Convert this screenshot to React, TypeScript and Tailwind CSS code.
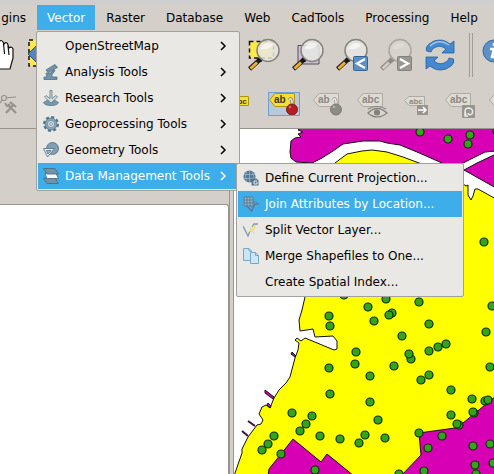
import React, { ReactNode } from 'react';

const topMenus = ['Raster', 'Database', 'Web', 'CadTools', 'Processing', 'Help'];

function Magnifier({ muted = false }: { muted?: boolean }) {
  return (
    <g>
      <path d="M1.500 30 L12 20.500" stroke={muted ? '#8d8a85' : '#222'} strokeWidth="4.500" />
      <path d="M2.500 29.500 L9 23.500" stroke={muted ? '#cfccc5' : '#f4b02c'} strokeWidth="2.800" />
      <circle cx="12" cy="20.500" r="2.500" fill={muted ? '#8d8a85' : '#161616'} />
      <circle cx="20" cy="11.500" r="11" fill={muted ? '#d6d3cc' : '#e6e6e4'} fillOpacity="0.85" stroke={muted ? '#a9a69f' : '#85857d'} strokeWidth="1.500" />
      <path d="M12.500 10a8 8 0 0 1 13-4q-4 5-13 4" fill="#fff" fillOpacity={muted ? 0.2 : 0.6} />
    </g>
  );
}

function Toolbar1Icon({ kind }: { kind: string }) {
  return (
    <svg className="size-8 overflow-visible" viewBox="0 0 32 32" aria-hidden="true">
      {kind === 'hand' && (
        <g fill="#fff" stroke="#111" strokeWidth="1.200">
          <path d="M10 30L3 18q0-3 3-3l5 5V6q2-3 4 0V3q2-3 4 0l1 2q3-3 4 1l1 3q3-2 4 1v9l-3 11z" />
          <path d="M15 5v10M19.500 4l1 11M24 7l1 9" fill="none" />
        </g>
      )}
      {kind === 'pan' && (
        <>
          <path d="M1 1H27V27H1Z" fill="#ffe94a" stroke="#111" strokeWidth="1.500" strokeDasharray="4 3" />
          <path d="M0 15l9-9v18z" fill="#5b83b9" stroke="#31537e" />
        </>
      )}
      {kind === 'selection' && (
        <>
          <path d="M1.500 2.500H25.500V19H1.500Z" fill="#ffe94a" stroke="#111" strokeWidth="1.500" strokeDasharray="4 3" />
          <Magnifier />
        </>
      )}
      {kind === 'layer' && (
        <>
          <path d="M6 6.500H27V25H6Z" fill="#cdbfd2" stroke="#5d4a60" />
          <Magnifier />
        </>
      )}
      {(kind === 'last' || kind === 'next') && (
        <>
          <Magnifier muted={kind === 'next'} />
          <rect x="17.500" y="17.500" width="14" height="14" rx="1" fill={kind === 'last' ? '#5b8fc5' : '#9a9893'} stroke={kind === 'last' ? '#38648f' : '#85827d'} />
          <path d={kind === 'last' ? 'M29 20l-8 4.500 8 4.500' : 'M20 20l8 4.500-8 4.500'} fill="none" stroke="#fff" strokeWidth="2.200" />
        </>
      )}
      {kind === 'refresh' && (
        <g fill="#4588cf" stroke="#296098" strokeWidth="0.800">
          <path d="M2.500 12Q1 8 5 5L10 2Q19-1 26 5L30 2V14H18L22 10Q16 5 10 9Q8 10 7 13Z" />
          <path d="M29.500 20Q31 24 27 27L22 30Q13 33 6 27L2 30V18H14L10 22Q16 27 22 23Q24 22 25 19Z" />
          <path d="M6 7Q15-1 25 6" fill="none" stroke="#9fc6ee" strokeWidth="1.500" />
        </g>
      )}
      {kind === 'info' && (
        <>
          <circle cx="14" cy="12" r="11" fill="#5c91c7" stroke="#396b9e" />
          <g stroke="#fff" strokeWidth="2.500" fill="none">
            <path d="M10 10h4l-2 8h4" />
            <path d="M14 4v3" />
          </g>
        </>
      )}
    </svg>
  );
}

function LabelIcon({ kind }: { kind: string }) {
  const yellow = kind === 'pinned' || kind === 'labels';
  const small = kind === 'move' || kind === 'labels';
  const short = kind === 'pinned' || kind === 'unpin';
  return (
    <svg className="block h-6 w-8 overflow-visible" viewBox="0 0 32 24" aria-hidden="true">
      {kind === 'node' ? (
        <g fill="none" stroke="#96938d" strokeWidth="1.200">
          <path d="M7 12L12 6 24 5" />
          <circle cx="12" cy="6" r="2.500" fill="#d4d0c8" />
          <path d="M14 21L22 12M16 13l8 8" strokeWidth="2.200" />
          <path d="M18 10l6 5M13 11l2 3 3-2" strokeWidth="2" />
        </g>
      ) : (
        <>
          <path
            d={small ? 'M4.500 8.500L9 4.500H24.500V13.500H9Z' : 'M1.500 8L7 1.500H26.500V14.500H7Z'}
            fill={yellow ? '#f7df31' : '#dedbd4'}
            stroke={yellow ? '#af9214' : '#aeaba5'}
          />
          {kind !== 'tag' && (
            <text
              x={small ? 9 : 6}
              y={small ? 12 : 11}
              fontSize={small ? 8 : 10}
              fontWeight="bold"
              fontFamily="Liberation Sans, sans-serif"
              fill={yellow ? '#39391f' : '#8b8882'}
            >
              {short ? 'ab' : 'abc'}
            </text>
          )}
          {short && (
            <>
              <path d="M21 8q2-3 3 1v5" fill="none" stroke={yellow ? '#777' : '#96938d'} strokeWidth="3" />
              <path d="M21 8q2-3 3 1v5" fill="none" stroke="#eee" strokeWidth="1.500" />
              <circle cx="24" cy="17.500" r="5.500" fill={yellow ? '#b41f25' : '#8e8b85'} stroke={yellow ? '#80171b' : '#7d7a75'} />
              <circle cx="22" cy="15" r="1.300" fill="#fff" opacity="0.350" />
            </>
          )}
          {kind === 'show' && (
            <g fill="none" stroke="#85827c" strokeWidth="1.200">
              <path d="M12 21q9-9 19 0-10 8-19 0z" fill="#d9d6cf" />
              <path d="M12 17q9-5 18 0" />
              <circle cx="21" cy="20.500" r="2.500" fill="#85827c" />
            </g>
          )}
          {kind === 'move' && (
            <>
              <rect x="17" y="13" width="11" height="10" fill="#98958f" />
              <path d="M18 18h8M23 15l3 3-3 3" fill="none" stroke="#fff" strokeWidth="1.500" />
            </>
          )}
          {kind === 'rotate' && (
            <>
              <rect x="18" y="13" width="13" height="13" rx="1" fill="#98958f" />
              <path d="M22 23q-3-7 3-7 5 1 3 6-3 2-4-1m-3-1v4h3" fill="none" stroke="#eee" strokeWidth="1.500" />
            </>
          )}
        </>
      )}
    </svg>
  );
}

const icons: Record<string, ReactNode> = {
  analysis: (
    <g fill="#7094ac" stroke="#506f83" strokeWidth="0.800">
      <path d="M3 6L12 .5l2.500 3L5 8.500z" />
      <path d="M3 9h5l1-2 3-1q-1 3-3 4v3h5v2.500H1V13h3z" />
    </g>
  ),
  research: (
    <g fill="#7598ad" stroke="#58788b" strokeWidth="0.800">
      <path d="M.5 12.500L4 10.500h8l3.500 2q-1 3-7.500 3t-7.500-3z" />
      <path d="M7 .5h2v8l4-3 1.500 1.500L8 13 1.500 7 3 5.500l4 3z" fill="#d3dbdf" />
    </g>
  ),
  gear: (
    <g>
      <circle cx="8" cy="8" r="6.800" fill="none" stroke="#53758c" strokeWidth="2.400" strokeDasharray="3 2.340" />
      <circle cx="8" cy="8" r="6" fill="#86a4b8" stroke="#53758c" strokeWidth="0.800" />
      <circle cx="8" cy="8" r="3.500" fill="#dfe4e6" stroke="#6a8798" strokeWidth="0.800" />
      <circle cx="8" cy="8" r="1.500" fill="#e9e8e4" stroke="#6a8798" strokeWidth="0.800" />
    </g>
  ),
  geometry: (
    <g stroke="#587789" strokeWidth="0.900">
      <circle cx="9.500" cy="6.500" r="6" fill="#809fb5" />
      <path d="M.5 6.500h11L4.500 15z" fill="#ecece8" />
      <path d="M3.500 8.500h4.500L5 12z" fill="#a9bbc5" />
    </g>
  ),
  layers: (
    <g stroke="#4b6778" strokeWidth="0.800">
      <path d="M.5 10h11.500l3.500 5.500H4z" fill="#6f93a9" />
      <path d="M2 5.500h11l2.500 5H4z" fill="#f6f5f2" />
      <path d="M.5.5H12L15.500 6H4z" fill="#6f93a9" />
    </g>
  ),
  projection: (
    <g>
      <circle cx="6.500" cy="6.500" r="6" fill="#527895" />
      <path d="M1 4.500h11M1 8.500h11M6.500 1v11M3.500 2q-2 4 0 9M9.500 2q2 4 0 9" fill="none" stroke="#a5bccb" strokeWidth="0.700" />
      <path d="M8.500 8.500h5l2 2v5h-7z" fill="#58758b" />
      <path d="M14 11h-3v3h3v-2" fill="none" stroke="#eee" />
    </g>
  ),
  join: (
    <g fill="none" stroke="#587d97">
      <path d="M1 1h9v9H1zM1 4h9M4 1v9M7 1v9M1 7h9" fill="#98b4c6" />
      <path d="M4 10l4.500 5L12 8h4" strokeWidth="1.500" />
      <rect x="11" y="6" width="2" height="2" fill="#a8bac5" />
    </g>
  ),
  split: (
    <g fill="none">
      <path d="M0 4l5 10 2-5M9 5l2-3h4" stroke="#8699a5" strokeWidth="1.300" />
      <path d="M7 8l5-2M8 8l4 4M7 5l2 5M12 3l-2 6M6 10l7-6" stroke="#e9df7a" />
    </g>
  ),
  merge: (
    <g fill="#c9e6f8" stroke="#77a7c5">
      <path d="M.5.5H6L8.500 3v9.500h-8zM6 .5V3h2.500" />
      <path d="M7.500 4.500h5l3 3v8h-8zM12.500 4.500v3h3" />
    </g>
  ),
};

function MenuIcon({ name }: { name?: string }) {
  return (
    <span className="size-4 shrink-0">
      {name && <svg className="size-4" viewBox="0 0 16 16" aria-hidden="true">{icons[name]}</svg>}
    </span>
  );
}

function MenuRow({ label, icon, active = false, arrow = false }: { label: string; icon?: string; active?: boolean; arrow?: boolean }) {
  return (
    <button
      type="button"
      role="menuitem"
      aria-haspopup={arrow ? 'menu' : undefined}
      className={`flex h-[26px] w-full items-center gap-[6px] pr-2 pl-[5px] text-left whitespace-nowrap ${active ? 'bg-[#3daee9] text-white' : 'text-black'}`}
    >
      <MenuIcon name={icon} />
      <span className="flex-1">{label}</span>
      {arrow && (
        <svg className="size-3" viewBox="0 0 12 12" fill="none" stroke="currentColor" strokeWidth="1.500" aria-hidden="true">
          <path d="M3 2l4 4-4 4" />
        </svg>
      )}
    </button>
  );
}

const vectorItems = [
  { label: 'OpenStreetMap' },
  { label: 'Analysis Tools', icon: 'analysis' },
  { label: 'Research Tools', icon: 'research' },
  { label: 'Geoprocessing Tools', icon: 'gear' },
  { label: 'Geometry Tools', icon: 'geometry' },
];

const dataItems = [
  { label: 'Define Current Projection...', icon: 'projection' },
  { label: 'Join Attributes by Location...', icon: 'join', active: true },
  { label: 'Split Vector Layer...', icon: 'split' },
  { label: 'Merge Shapefiles to One...', icon: 'merge' },
  { label: 'Create Spatial Index...' },
];

const panel = 'absolute z-10 rounded-[2px] border border-[#a3a19c] bg-[#e9e8e4] p-px';

function VectorMenu() {
  return (
    <div role="menu" aria-label="Vector" className={`${panel} top-[26px] -left-px w-[204px]`}>
      {vectorItems.map((item) => (
        <MenuRow key={item.label} {...item} arrow />
      ))}
      <div className="relative">
        <MenuRow label="Data Management Tools" icon="layers" active arrow />
        <div role="menu" aria-label="Data Management Tools" className={`${panel} top-0 left-[198px] w-[228px]`}>
          {dataItems.map((item) => (
            <MenuRow key={item.label} {...item} />
          ))}
        </div>
      </div>
    </div>
  );
}

const points = [
  [420, 132], [448, 139], [470, 135], [468, 144], [497, 131], [484, 242], [344, 295], [386, 299], [419, 302],
  [368, 307], [392, 313], [389, 315], [329, 316], [330, 326], [374, 321], [429, 324], [402, 336], [492, 306],
  [486, 332], [446, 344], [438, 347], [429, 351], [356, 352], [355, 364], [411, 359], [409, 354], [394, 366],
  [329, 368], [370, 376], [429, 375], [421, 380], [490, 367], [451, 390], [330, 394], [370, 402], [378, 420],
  [292, 413], [312, 416], [306, 424], [300, 431], [320, 436], [340, 439], [359, 443], [365, 435], [385, 438],
  [274, 436], [268, 444], [262, 450], [281, 454], [315, 470], [472, 399], [485, 401], [488, 400], [451, 415],
  [474, 413], [473, 412], [459, 425], [457, 424], [419, 433], [442, 436], [428, 448], [473, 446], [490, 444],
  [475, 465], [493, 463], [424, 471], [399, 474], [476, 474],
];

function MapCanvas() {
  return (
    <svg className="block h-full min-h-[345px] w-full bg-white" viewBox="234 129 260 345" preserveAspectRatio="xMinYMin slice" role="img" aria-label="Map canvas">
      <g stroke="#111" strokeWidth="1">
        <path
          d="M302 127L298 130 303 132 298 134 301 137 295 138 291 141 290 152 291 158 296 162 312 163 322 158 333 151 343 144 363 141 380 141 387 143 400 145 417 152 442 163 452 168 463 163 475 157 485 152 496 151V127Z"
          fill="#d700b5"
        />
        <path
          d="M305 297L320 180 335 163 347 154 362 151 372 150 387 152 403 157 419 163 463 184 466 186 468 185 468 195 471 200 473 196 475 189 478 189 496 199V476H234L242 453 242 449 248 437 257 425 261 424 263 420 259 414 262 407 266 405 270 408 274 398 279 390 286 383 290 377 295 358 298 350 299 343 295 340 297 338 301 341 305 338 310 340 334 350 337 349 337 341 333 336 315 337 313 329 300 331 299 320 302 310Z"
          fill="#ff0"
        />
        <path d="M464 170L477 163 496 154V188Z" fill="#d700b5" />
        <path d="M268 476L269 469 293 439 321 462 327 454 354 476Z" fill="#d700b5" />
        <path d="M401 476L421 455 419 433 455 428 463 423 496 396V476Z" fill="#d700b5" />
        <path d="M265 390l9 7-1 2-8-6ZM292 352l4 4-1 1-4-3ZM268 403l3 3-1 2-3-3Z" fill="#d700b5" />
        <path d="M248 421l7 5M242 431l6 5" fill="none" stroke="#40103a" strokeWidth="2" />
      </g>
      <g fill="#33a51c" stroke="#102d08" strokeWidth="1.200">
        {points.map(([x, y]) => <circle key={`${x}-${y}`} cx={x} cy={y} r="4" />)}
      </g>
    </svg>
  );
}

const mainTools = ['hand', 'pan', 'layer', 'last', 'next', 'refresh', 'selection', 'layer', 'last', 'next', 'refresh'];
const labelTools = ['labels', 'pinned', 'unpin', 'show', 'move', 'rotate', 'tag'];

export default function App() {
  return (
    <div className="flex min-h-screen flex-col overflow-hidden bg-[#d4cfc8] font-['DejaVu_Sans',sans-serif] text-[12px] leading-4 text-black">
      <header className="border-t-[5px] border-[#cfcfcf]">
        <nav aria-label="Main menu" className="flex h-[25px] gap-px whitespace-nowrap">
          <button type="button" aria-label="Plugins" className="flex w-9 items-center justify-end pr-[10px]">gins</button>
          <div className="relative">
            <button type="button" aria-expanded="true" className="h-full bg-[#3daee9] px-[10px] text-white">Vector</button>
            <VectorMenu />
          </div>
          {topMenus.map((name) => <button type="button" key={name} className="px-[10px]">{name}</button>)}
        </nav>
        <div role="toolbar" aria-label="Navigation" className="-ml-[22px] flex h-[50px] items-center">
          {mainTools.map((kind, index) => (
            <button type="button" key={index} aria-label={kind} className="flex w-11 shrink-0 justify-center"><Toolbar1Icon kind={kind} /></button>
          ))}
          <span className="mx-[7px] h-11 w-1 shrink-0 border-x border-[#a19e98]" />
          <button type="button" aria-label="info" className="flex w-8 shrink-0 justify-center"><Toolbar1Icon kind="info" /></button>
        </div>
        <div role="toolbar" aria-label="Labels" className="-ml-[14px] flex h-12 items-center">
          <button type="button" aria-label="Node tool" className="flex w-11 shrink-0 justify-center"><LabelIcon kind="node" /></button>
          <span className="w-[188px] shrink-0" />
          {labelTools.map((kind) => (
            <button type="button" key={kind} aria-label={kind} className="flex w-11 shrink-0 justify-center">
              <span className={kind === 'pinned' ? 'bg-[#bac9da] outline-1 -outline-offset-1 outline-[#6e9fd5]' : ''}><LabelIcon kind={kind} /></span>
            </button>
          ))}
        </div>
      </header>
      <main className="flex flex-1 border-t border-[#98958f]">
        <aside className="flex w-[229px] shrink-0 pt-[75px]">
          <div className="flex-1 rounded-tr-[3px] border-t border-r border-[#98958f] bg-white" />
        </aside>
        <div role="separator" className="w-[5px] shrink-0 border-x border-[#98958f]" />
        <section className="min-w-0 flex-1"><MapCanvas /></section>
      </main>
    </div>
  );
}
